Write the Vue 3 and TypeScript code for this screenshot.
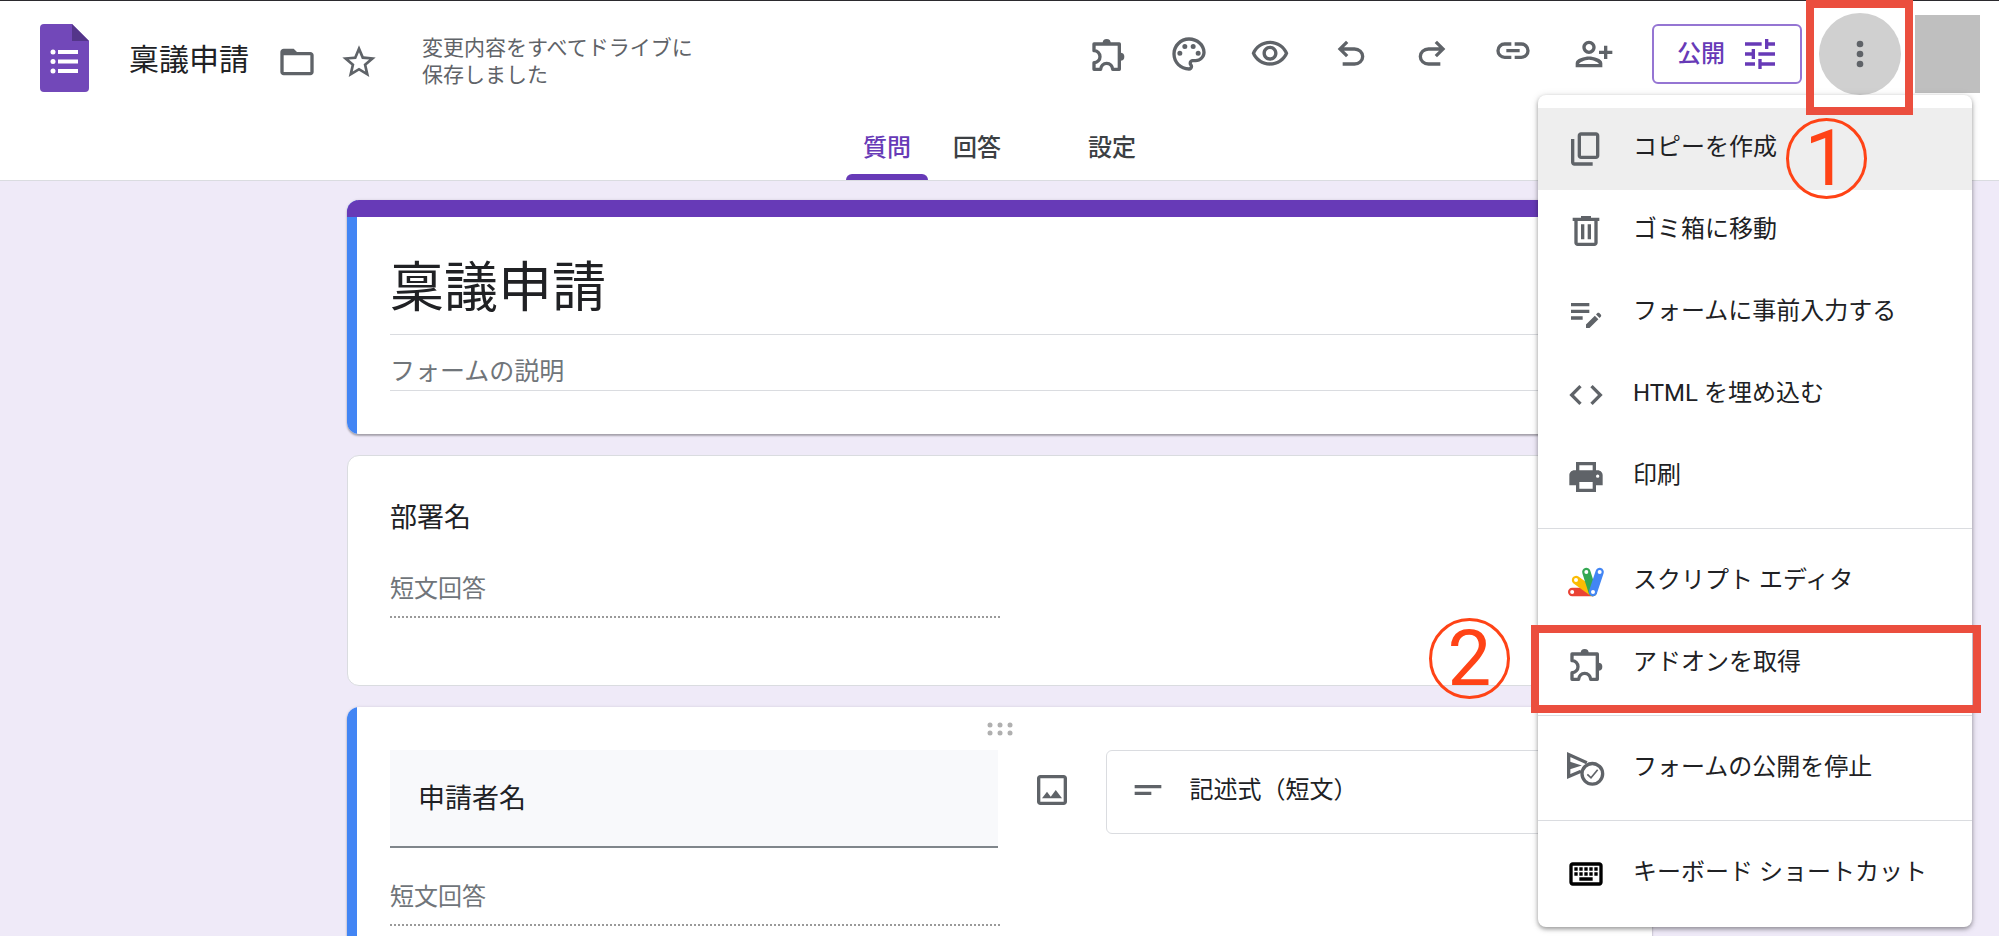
<script setup lang="ts">
import { ref } from 'vue'

interface Shape {
  d: string
  stroke?: number
  fill?: string
  line?: string
}

interface MenuEntry {
  id: string
  label: string
  icon: string
}

const icons: Record<string, Shape[]> = {
  folder: [
    { d: 'M4 20q-.825 0-1.412-.587T2 18V6q0-.825.588-1.412T4 4h6l2 2h8q.825 0 1.413.588T22 8v10q0 .825-.587 1.413T20 20zM4 8v10h16V8z' },
  ],
  star: [
    { d: 'M22 9.24l-7.19-.62L12 2 9.19 8.63 2 9.24l5.46 4.73L5.82 21 12 17.27 18.18 21l-1.63-7.03L22 9.24zM12 15.4l-3.76 2.27 1-4.28-3.32-2.88 4.38-.38L12 6.1l1.71 4.04 4.38.38-3.32 2.88 1 4.28L12 15.4z' },
  ],
  extension: [
    { d: 'M3.6 6h15.2v15.2h-4a3.6 3.6 0 0 0-7.2 0h-4v-4a3.6 3.6 0 0 0 0-7.2z', stroke: 2 },
    { d: 'M8.8 5.4a2.4 2.4 0 0 1 4.8 0zM19.4 11.2a2.4 2.4 0 0 1 0 4.8z' },
  ],
  palette: [
    { d: 'M12 22C6.49 22 2 17.51 2 12S6.49 2 12 2s10 4.04 10 9c0 3.31-2.69 6-6 6h-1.77c-.28 0-.5.22-.5.5 0 .12.05.23.13.33.41.47.64 1.06.64 1.67A2.5 2.5 0 0 1 12 22zm0-18c-4.41 0-8 3.59-8 8s3.59 8 8 8c.28 0 .5-.22.5-.5a.54.54 0 0 0-.14-.35c-.41-.46-.63-1.05-.63-1.65a2.5 2.5 0 0 1 2.5-2.5H16c2.21 0 4-1.79 4-4 0-3.86-3.59-7-8-7z' },
    { d: 'M5 11.5a1.5 1.5 0 1 0 3 0 1.5 1.5 0 1 0-3 0M8 7.5a1.5 1.5 0 1 0 3 0 1.5 1.5 0 1 0-3 0M13 7.5a1.5 1.5 0 1 0 3 0 1.5 1.5 0 1 0-3 0M16 11.5a1.5 1.5 0 1 0 3 0 1.5 1.5 0 1 0-3 0' },
  ],
  eye: [
    { d: 'M12 6c3.79 0 7.17 2.13 8.82 5.5C19.17 14.87 15.79 17 12 17s-7.17-2.13-8.82-5.5C4.83 8.13 8.21 6 12 6m0-2C7 4 2.73 7.11 1 11.5 2.73 15.89 7 19 12 19s9.27-3.11 11-7.5C21.27 7.11 17 4 12 4zm0 5c1.38 0 2.5 1.12 2.5 2.5S13.38 14 12 14s-2.5-1.12-2.5-2.5S10.62 9 12 9m0-2c-2.48 0-4.5 2.02-4.5 4.5S9.52 16 12 16s4.5-2.02 4.5-4.5S14.48 7 12 7z' },
  ],
  undo: [
    { d: 'M7 19v-2h7.1q1.575 0 2.738-1T18 13.5 16.838 11 14.1 10H7.8l2.6 2.6L9 14 4 9l5-5 1.4 1.4L7.8 8h6.3q2.425 0 4.163 1.575T20 13.5t-1.737 3.925T14.1 19z' },
  ],
  redo: [
    { d: 'M9.9 19q-2.425 0-4.163-1.575T4 13.5t1.737-3.925T9.9 8h6.3l-2.6-2.6L15 4l5 5-5 5-1.4-1.4 2.6-2.6H9.9q-1.575 0-2.738 1T6 13.5 7.162 16 9.9 17H17v2z' },
  ],
  link: [
    { d: 'M11 15H7q-2.075 0-3.537-1.463T2 10t1.463-3.537T7 5h4v2H7q-1.25 0-2.125.875T4 10t.875 2.125T7 13h4zm-3-4V9h8v2zm5 4v-2h4q1.25 0 2.125-.875T20 10t-.875-2.125T17 7h-4V5h4q2.075 0 3.538 1.463T22 10t-1.463 3.538T17 15z' },
  ],
  personAdd: [
    { d: 'M13 8c0-2.21-1.79-4-4-4S5 5.79 5 8s1.79 4 4 4 4-1.79 4-4zm-2 0c0 1.1-.9 2-2 2s-2-.9-2-2 .9-2 2-2 2 .9 2 2zM1 17.5V20h16v-2.5c0-2.66-5.33-4-8-4s-8 1.34-8 4zM3 18c.2-.71 3.3-2.5 6-2.5 2.69 0 5.78 1.78 6 2.5zM20 15v-3h3v-2h-3V7h-2v3h-3v2h3v3z' },
  ],
  tune: [
    { d: 'M3 17v2h6v-2H3zM3 5v2h10V5H3zm10 16v-2h8v-2h-8v-2h-2v6h2zM7 9v2H3v2h4v2h2V9H7zm14 4v-2H11v2h10zm-6-4h2V7h4V5h-4V3h-2v6z' },
  ],
  more: [
    { d: 'M10 6a2 2 0 1 0 4 0 2 2 0 1 0-4 0M10 12a2 2 0 1 0 4 0 2 2 0 1 0-4 0M10 18a2 2 0 1 0 4 0 2 2 0 1 0-4 0' },
  ],
  image: [
    { d: 'M5 21q-.825 0-1.412-.587T3 19V5q0-.825.588-1.412T5 3h14q.825 0 1.413.588T21 5v14q0 .825-.587 1.413T19 21zm0-2h14V5H5zM6 17l3-4 2.25 3 3-4L18 17z' },
  ],
  shortText: [{ d: 'M4 9h16v2H4zM4 13h10v2H4z' }],
  copy: [
    { d: 'M9 18q-.825 0-1.412-.587T7 16V4q0-.825.588-1.412T9 2h9q.825 0 1.413.588T20 4v12q0 .825-.587 1.413T18 18zm0-2h9V4H9zm-4 6q-.825 0-1.412-.587T3 20V6h2v14h11v2z' },
  ],
  trash: [
    { d: 'M7 21q-.825 0-1.412-.587T5 19V6H4V4h5V3h6v1h5v2h-1v13q0 .825-.587 1.413T17 21zM17 6H7v13h10zM9 17h2V8H9zm4 0h2V8h-2z' },
  ],
  editNote: [
    { d: 'M3 10h11v2H3v-2zm0-2h11V6H3v2zm0 8h7v-2H3v2zm15.01-3.13.71-.71c.39-.39 1.02-.39 1.41 0l.71.71c.39.39.39 1.02 0 1.41l-.71.71-2.12-2.12zm-.71.71-5.3 5.3V21h2.12l5.3-5.3-2.12-2.12z' },
  ],
  code: [
    { d: 'M9.4 16.6 4.8 12l4.6-4.6L8 6l-6 6 6 6 1.4-1.4zm5.2 0 4.6-4.6-4.6-4.6L16 6l6 6-6 6-1.4-1.4z' },
  ],
  print: [
    { d: 'M19 8h-1V3H6v5H5c-1.66 0-3 1.34-3 3v6h4v4h12v-4h4v-6c0-1.66-1.34-3-3-3zM8 5h8v3H8zm8 14H8v-4h8zm3-6.5a1 1 0 1 1 0-2 1 1 0 0 1 0 2z' },
  ],
  script: [
    { d: 'M3.7 18H16', stroke: 5, line: '#ea4335' },
    { d: 'M6 10.8 16 18', stroke: 5, line: '#fbbc04' },
    { d: 'M12.2 6 16 18', stroke: 5, line: '#34a853' },
    { d: 'M20.2 6 16.2 18', stroke: 5, line: '#4285f4' },
    { d: 'M2.5 18a1.2 1.2 0 1 0 2.4 0 1.2 1.2 0 1 0-2.4 0M4.8 10.8a1.2 1.2 0 1 0 2.4 0 1.2 1.2 0 1 0-2.4 0M11 6a1.2 1.2 0 1 0 2.4 0 1.2 1.2 0 1 0-2.4 0M19 6a1.2 1.2 0 1 0 2.4 0 1.2 1.2 0 1 0-2.4 0M15 18a1.2 1.2 0 1 0 2.4 0 1.2 1.2 0 1 0-2.4 0', fill: '#ffffff' },
  ],
  unpublish: [
    { d: 'M12.5 8.2 1.6 3.3v13.2l7.4-3.1', stroke: 2 },
    { d: 'M2 7.5 9.5 9.9 2 12.3z' },
    { d: 'M9.6 14.9a6.2 6.2 0 1 0 12.4 0 6.2 6.2 0 1 0-12.4 0', stroke: 2 },
    { d: 'M12.8 15.2l2.2 2.1 4-4.8', stroke: 1 },
  ],
  keyboard: [
    { d: 'M4 19q-.825 0-1.412-.587T2 17V7q0-.825.588-1.412T4 5h16q.825 0 1.413.588T22 7v10q0 .825-.587 1.413T20 19zm0-2h16V7H4zm4-1h8v-2H8zM5 8h2v2H5zm3 0h2v2H8zm3 0h2v2h-2zm3 0h2v2h-2zm3 0h2v2h-2zM5 11h2v2H5zm3 0h2v2H8zm3 0h2v2h-2zm3 0h2v2h-2zm3 0h2v2h-2z' },
  ],
}

const nameActions = [
  { icon: 'folder', label: '移動' },
  { icon: 'star', label: 'スターを付ける' },
]

const tools = [
  { icon: 'extension', label: 'アドオン' },
  { icon: 'palette', label: 'テーマをカスタマイズ' },
  { icon: 'eye', label: 'プレビュー' },
  { icon: 'undo', label: '元に戻す' },
  { icon: 'redo', label: 'やり直す' },
  { icon: 'link', label: '回答者へのリンクをコピー' },
  { icon: 'personAdd', label: '共有' },
]

const tabs = [
  { id: 'questions', label: '質問' },
  { id: 'responses', label: '回答' },
  { id: 'settings', label: '設定' },
]

const menuGroups: MenuEntry[][] = [
  [
    { id: 'copy', label: 'コピーを作成', icon: 'copy' },
    { id: 'trash', label: 'ゴミ箱に移動', icon: 'trash' },
    { id: 'prefill', label: 'フォームに事前入力する', icon: 'editNote' },
    { id: 'embed', label: 'HTML を埋め込む', icon: 'code' },
    { id: 'print', label: '印刷', icon: 'print' },
  ],
  [
    { id: 'script', label: 'スクリプト エディタ', icon: 'script' },
    { id: 'addons', label: 'アドオンを取得', icon: 'extension' },
  ],
  [{ id: 'unpublish', label: 'フォームの公開を停止', icon: 'unpublish' }],
  [{ id: 'keyboard', label: 'キーボード ショートカット', icon: 'keyboard' }],
]

const activeTab = ref('questions')
const activeEntry = ref('copy')
const title = ref('稟議申請')
const description = ref('')
const question = ref('申請者名')
const answerType = ref('short')
</script>

<template>
  <div class="app">
    <header class="header">
      <div class="bar">
        <div class="document">
          <a class="logo" href="#" aria-label="フォームのホーム">
            <svg class="logo-art" viewBox="0 0 49 68" aria-hidden="true">
              <path d="M4 0h28l17 17v47a4 4 0 0 1-4 4H4a4 4 0 0 1-4-4V4a4 4 0 0 1 4-4z" fill="#7248b9" />
              <path d="M32 0l17 17H32z" fill="#54358a" />
              <path d="M18 26h20v4H18zM18 35.5h20v4H18zM18 45h20v4H18z" fill="#fff" />
              <circle cx="13" cy="28" r="2.5" fill="#fff" />
              <circle cx="13" cy="37.5" r="2.5" fill="#fff" />
              <circle cx="13" cy="47" r="2.5" fill="#fff" />
            </svg>
          </a>
          <h1 class="name">稟議申請</h1>
          <div class="name-actions">
            <button v-for="item in nameActions" :key="item.icon" class="plain" type="button" :aria-label="item.label">
              <svg class="icon" viewBox="0 0 24 24" aria-hidden="true">
                <path v-for="(s, i) in icons[item.icon]" :key="i" :d="s.d" fill="currentColor" />
              </svg>
            </button>
          </div>
          <p class="saved">変更内容をすべてドライブに<br />保存しました</p>
        </div>

        <div class="actions">
          <button v-for="tool in tools" :key="tool.icon" class="plain tool" type="button" :aria-label="tool.label">
            <svg class="icon" viewBox="0 0 24 24" aria-hidden="true">
              <path
                v-for="(s, i) in icons[tool.icon]"
                :key="i"
                :d="s.d"
                :fill="s.stroke ? 'none' : 'currentColor'"
                :stroke="s.stroke ? 'currentColor' : 'none'"
                :stroke-width="s.stroke"
                stroke-linejoin="round"
              />
            </svg>
          </button>
          <button class="publish" type="button">
            <span class="publish-label">公開</span>
            <svg class="icon" viewBox="0 0 24 24" aria-hidden="true">
              <path v-for="(s, i) in icons.tune" :key="i" :d="s.d" fill="currentColor" />
            </svg>
          </button>
          <div class="more-slot">
            <button class="more" type="button" aria-label="その他" aria-haspopup="menu" aria-expanded="true">
              <svg class="icon" viewBox="0 0 24 24" aria-hidden="true">
                <path v-for="(s, i) in icons.more" :key="i" :d="s.d" fill="currentColor" />
              </svg>
            </button>
            <span class="frame frame-more"></span>
          </div>
          <div class="account"></div>
        </div>
      </div>

      <nav class="tabs" role="tablist">
        <button
          v-for="tab in tabs"
          :key="tab.id"
          class="tab"
          :class="[tab.id, { active: tab.id === activeTab }]"
          type="button"
          role="tab"
          :aria-selected="tab.id === activeTab"
          @click="activeTab = tab.id"
        >
          {{ tab.label }}
        </button>
      </nav>
    </header>

    <main class="canvas">
      <div class="column">
        <section class="card selected heading-card">
          <input v-model="title" class="form-title" type="text" aria-label="フォームのタイトル" />
          <input v-model="description" class="form-description" type="text" placeholder="フォームの説明" aria-label="フォームの説明" />
        </section>

        <section class="card outlined">
          <label class="question" for="department">部署名</label>
          <input id="department" class="answer" type="text" placeholder="短文回答" readonly />
        </section>

        <section class="card selected editing">
          <button class="plain handle" type="button" aria-label="質問を移動">
            <svg class="grip" viewBox="0 0 26 14" aria-hidden="true">
              <circle v-for="n in 6" :key="n" :cx="3 + ((n - 1) % 3) * 10" :cy="n > 3 ? 11 : 3" r="2.5" fill="#b0b0b0" />
            </svg>
          </button>
          <div class="editor">
            <input v-model="question" class="question-input" type="text" aria-label="質問" />
            <button class="plain add-image" type="button" aria-label="画像を追加">
              <svg class="icon" viewBox="0 0 24 24" aria-hidden="true">
                <path v-for="(s, i) in icons.image" :key="i" :d="s.d" fill="currentColor" />
              </svg>
            </button>
            <div class="type-box">
              <svg class="icon" viewBox="0 0 24 24" aria-hidden="true">
                <path v-for="(s, i) in icons.shortText" :key="i" :d="s.d" fill="currentColor" />
              </svg>
              <select v-model="answerType" class="type" aria-label="質問の形式">
                <option value="short">記述式（短文）</option>
              </select>
            </div>
          </div>
          <input class="answer" type="text" placeholder="短文回答" aria-label="短文回答" readonly />
        </section>
      </div>
    </main>

    <div class="menu" role="menu">
      <div v-for="(group, g) in menuGroups" :key="g" class="group">
        <button
          v-for="entry in group"
          :key="entry.id"
          class="entry"
          :class="[entry.id, { hovered: entry.id === activeEntry }]"
          type="button"
          role="menuitem"
          @mouseenter="activeEntry = entry.id"
        >
          <svg class="icon" viewBox="0 0 24 24" aria-hidden="true">
            <path
              v-for="(s, i) in icons[entry.icon]"
              :key="i"
              :d="s.d"
              :fill="s.fill ?? (s.stroke ? 'none' : 'currentColor')"
              :stroke="s.stroke ? (s.line ?? 'currentColor') : 'none'"
              :stroke-width="s.stroke"
              :stroke-linecap="s.line ? 'round' : 'butt'"
              :stroke-linejoin="entry.id === 'unpublish' ? 'miter' : 'round'"
            />
          </svg>
          <span class="entry-label">{{ entry.label }}</span>
          <span v-if="entry.id === 'copy'" class="step step-one">1</span>
          <template v-if="entry.id === 'addons'">
            <span class="frame frame-addons"></span>
            <span class="step step-two">2</span>
          </template>
        </button>
      </div>
    </div>
  </div>
</template>

<style>
body {
  margin: 0;
}
</style>

<style scoped>
.app,
.app * {
  box-sizing: border-box;
}

.app {
  position: relative;
  display: flex;
  flex-direction: column;
  height: 100vh;
  overflow: hidden;
  background: #efeaf8;
  color: #202124;
  font-family: Roboto, "Noto Sans CJK JP", sans-serif;
  font-size: 24px;
}

button,
input,
select {
  margin: 0;
  padding: 0;
  border: 0;
  border-radius: 0;
  background: none;
  color: inherit;
  font: inherit;
  outline: none;
}

.icon {
  display: block;
  flex: none;
  width: 40px;
  height: 40px;
  overflow: visible;
}

.header {
  display: flex;
  flex: none;
  flex-direction: column;
  border-top: 1px solid #2b2a2e;
  border-bottom: 1px solid #dadce0;
  background: #fff;
}

.bar {
  display: flex;
  align-items: flex-start;
  justify-content: space-between;
  height: 94px;
  padding: 12px 19px 0 40px;
}

.document {
  display: flex;
  align-items: center;
  height: 86px;
  padding-top: 11px;
}

.logo {
  align-self: flex-start;
  width: 49px;
  margin-right: 40px;
}

.logo-art {
  display: block;
  width: 49px;
  height: 68px;
}

.name {
  margin: 0 28px 0 0;
  padding-bottom: 4px;
  font-size: 30px;
  font-weight: 400;
  line-height: 40px;
  white-space: nowrap;
}

.name-actions {
  display: flex;
  gap: 22px;
  margin-right: 43px;
}

.plain {
  color: #5f6368;
}

.saved {
  margin: 0;
  color: #5f6368;
  font-size: 21px;
  line-height: 27px;
  white-space: nowrap;
}

.actions {
  display: flex;
  align-items: center;
  height: 82px;
}

.tool {
  display: flex;
  justify-content: center;
  width: 81px;
}

.publish {
  display: flex;
  align-items: center;
  gap: 15px;
  height: 60px;
  margin: 0 17px 0 18px;
  padding: 0 20px 0 23px;
  border: 2px solid #9575d3;
  border-radius: 6px;
  color: #673ab7;
  font-weight: 500;
}

.publish-label {
  padding-bottom: 6px;
}

.more-slot {
  position: relative;
}

.more {
  display: flex;
  align-items: center;
  justify-content: center;
  width: 82px;
  height: 82px;
  border-radius: 50%;
  background: #d0d0d0;
  color: #5f6368;
}

.account {
  width: 65px;
  height: 78px;
  margin-left: 14px;
  background: #bfbfbf;
}

.frame {
  position: absolute;
  z-index: 2;
  border: 8px solid #eb4e3e;
  pointer-events: none;
}

.frame-more {
  top: -13px;
  right: -12px;
  bottom: -20px;
  left: -13px;
}

.tabs {
  display: flex;
  justify-content: center;
  gap: 8px;
  margin-top: 19px;
}

.tab {
  position: relative;
  height: 66px;
  padding: 2px 17px 0;
  color: #3c4043;
  font-weight: 500;
  line-height: 64px;
}

.tab.responses {
  padding-right: 62px;
}

.tab.active {
  color: #673ab7;
}

.tab.active::after {
  content: "";
  position: absolute;
  right: 0;
  bottom: 0;
  left: 0;
  height: 6px;
  border-radius: 6px 6px 0 0;
  background: #673ab7;
}

.canvas {
  flex: 1;
  min-height: 0;
  padding: 19px 24px 0;
}

.column {
  display: flex;
  flex-direction: column;
  gap: 21px;
  max-width: 1305px;
  margin: 0 auto;
}

.card {
  position: relative;
  display: flex;
  flex-direction: column;
  padding: 0 43px;
  border-radius: 12px;
  background: #fff;
}

.selected {
  overflow: hidden;
  box-shadow: 0 2px 2px rgba(0, 0, 0, 0.28), 0 0 3px rgba(0, 0, 0, 0.12);
}

.selected::before {
  content: "";
  position: absolute;
  top: 0;
  bottom: 0;
  left: 0;
  width: 10px;
  background: #4285f4;
}

.heading-card {
  padding-top: 38px;
  padding-bottom: 43px;
}

.heading-card::after {
  content: "";
  position: absolute;
  top: 0;
  right: 0;
  left: 0;
  height: 17px;
  background: #673ab7;
}

.form-title {
  height: 97px;
  padding-bottom: 6px;
  border-bottom: 1px solid #dadce0;
  font-size: 54px;
}

.form-description {
  height: 41px;
  margin-top: 15px;
  padding-top: 2px;
  border-bottom: 1px solid #dadce0;
  font-size: 25px;
}

.form-description::placeholder,
.answer::placeholder {
  color: #70757a;
  opacity: 1;
}

.outlined {
  height: 231px;
  padding: 46px 42px 0;
  border: 1px solid #dadce0;
}

.question {
  font-size: 27px;
  line-height: 32px;
}

.answer {
  width: 50%;
  height: 45px;
  padding-bottom: 12px;
  border-bottom: 2px dotted #9a9a9a;
}

.outlined .answer {
  margin-top: 39px;
}

.editing {
  padding-bottom: 90px;
}

.handle {
  align-self: center;
  height: 43px;
  padding-top: 1px;
}

.grip {
  display: block;
  width: 26px;
  height: 14px;
}

.editor {
  display: grid;
  grid-template-columns: calc(50% - 2px) 108px 1fr;
  align-items: start;
  margin-bottom: 33px;
}

.question-input {
  height: 98px;
  padding: 0 28px 4px;
  border-bottom: 2px solid #80868b;
  background: #f8f9fb;
  font-size: 27px;
}

.add-image {
  display: flex;
  align-items: center;
  justify-content: center;
  height: 80px;
}

.type-box {
  display: flex;
  align-items: center;
  height: 84px;
  padding: 0 24px 4px 21px;
  border: 1px solid #dadce0;
  border-radius: 6px;
  color: #5f6368;
}

.type {
  flex: 1;
  height: 60px;
  padding-left: 22px;
  appearance: none;
  color: #202124;
}

.menu {
  position: absolute;
  z-index: 1;
  top: 95px;
  right: 27px;
  width: 434px;
  padding: 13px 0 12px;
  border-radius: 8px;
  background: #fff;
  box-shadow: 0 2px 4px rgba(0, 0, 0, 0.35), 0 1px 8px rgba(0, 0, 0, 0.12);
}

.group + .group {
  margin-top: 10px;
  padding-top: 12px;
  border-top: 1px solid #dadce0;
}

.entry {
  position: relative;
  display: flex;
  align-items: center;
  gap: 27px;
  width: 100%;
  height: 82px;
  padding: 0 28px;
  text-align: left;
  white-space: nowrap;
}

.entry .icon {
  color: #5f6368;
}

.entry.keyboard .icon {
  color: #000;
}

.entry-label {
  padding-bottom: 9px;
}

.entry.hovered {
  background: #eee;
}

.frame-addons {
  top: 2px;
  right: -9px;
  bottom: -8px;
  left: -7px;
}

.step {
  position: absolute;
  z-index: 3;
  display: flex;
  align-items: center;
  justify-content: center;
  width: 81px;
  height: 81px;
  border: 3px solid #ff4316;
  border-radius: 50%;
  color: #ff4316;
  font-size: 78px;
  line-height: 78px;
}

.step-one {
  top: 10px;
  right: 105px;
}

.step-two {
  top: -5px;
  right: 462px;
}
</style>
